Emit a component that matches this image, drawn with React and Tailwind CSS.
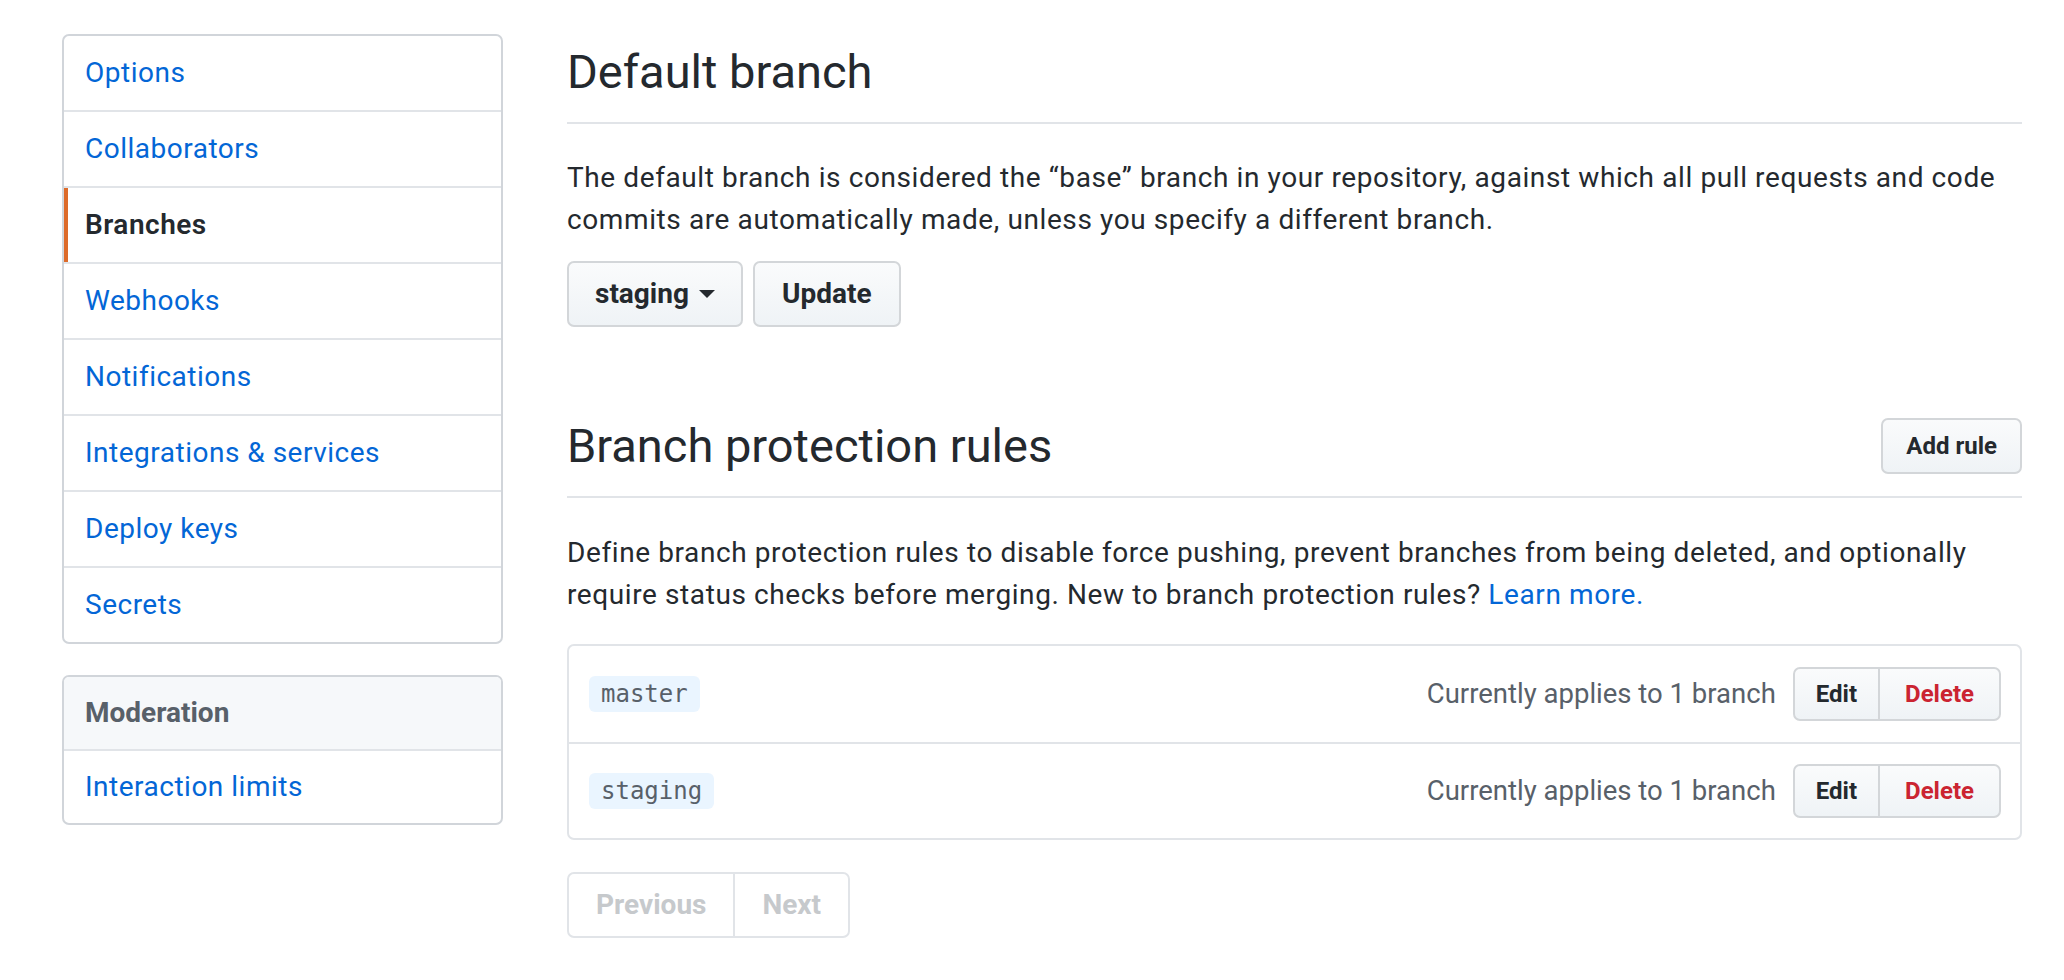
import React from 'react';

const menu = [
    { label: 'Options' },
    { label: 'Collaborators' },
    { label: 'Branches', selected: true },
    { label: 'Webhooks' },
    { label: 'Notifications' },
    { label: 'Integrations & services' },
    { label: 'Deploy keys' },
    { label: 'Secrets' }
];

const rules = ['master', 'staging'];

const btn = 'rounded-[7px] border-2 border-[#d3d6d9] bg-gradient-to-b from-[#fafbfc] to-[#eff3f6] font-bold text-[#24292e]';

const Sidebar = () => {
    return (
        <aside className="w-[441px] shrink-0">
            <nav className="rounded-[7px] border-2 border-[#d1d5da] overflow-hidden">
                {menu.map((item, index) => (
                    <a
                        key={item.label}
                        href="#"
                        className={`relative flex h-[74px] items-center pl-[21px] text-[28px] tracking-[0.5px] ${index > 0 ? 'border-t-2 border-[#e1e4e8] h-[76px]' : ''} ${item.selected ? 'font-semibold text-[#24292e]' : 'text-[#0366d6]'}`}
                    >
                        {/* orange marker for the current page */}
                        {item.selected && <span className="absolute left-0 top-0 bottom-0 w-[4px] bg-[#dd6b2a]"></span>}
                        {item.label}
                    </a>
                ))}
            </nav>

            <nav className="mt-[31px] rounded-[7px] border-2 border-[#d1d5da] overflow-hidden">
                <div className="flex h-[72px] items-center bg-[#f6f8fa] pl-[21px] text-[28px] font-bold text-[#586069]">
                    Moderation
                </div>
                <a href="#" className="flex h-[74px] items-center border-t-2 border-[#e1e4e8] pl-[21px] text-[28px] tracking-[0.5px] text-[#0366d6]">
                    Interaction limits
                </a>
            </nav>
        </aside>
    );
};

const App = () => {
    return (
        <div className="min-h-screen bg-white font-['Roboto',sans-serif] text-[#24292e]">
            <div className="flex gap-[64px] pl-[62px] pr-[42px] pt-[34px]">
                <Sidebar />

                <main className="flex-1 pt-[8px]">
                    <div className="border-b-2 border-[#e1e4e8] pb-[20px]">
                        <h2 className="text-[47px] leading-[60px] font-normal">Default branch</h2>
                    </div>
                    <p className="mt-[33px] text-[28px] leading-[42px] tracking-[0.6px]">
                        The default branch is considered the “base” branch in your repository, against which all pull requests and code commits are automatically made, unless you specify a different branch.
                    </p>
                    <div className="mt-[20px] flex gap-[10px]">
                        <button className={`${btn} flex h-[66px] items-center gap-[10px] px-[26px] text-[28px]`}>
                            staging
                            <svg width="16" height="8" viewBox="0 0 16 8">
                                <path d="M0 0h16L8 8z" fill="#24292e" />
                            </svg>
                        </button>
                        <button className={`${btn} h-[66px] px-[27px] text-[28px]`}>Update</button>
                    </div>

                    <div className="mt-[89px] flex items-center justify-between border-b-2 border-[#e1e4e8] pb-[20px]">
                        <h2 className="text-[47px] leading-[60px] font-normal">Branch protection rules</h2>
                        <button className={`${btn} h-[56px] px-[23px] text-[24px]`}>Add rule</button>
                    </div>
                    <p className="mt-[34px] text-[28px] leading-[42px] tracking-[0.6px]">
                        Define branch protection rules to disable force pushing, prevent branches from being deleted, and optionally require status checks before merging. New to branch protection rules?{' '}
                        <a href="#" className="text-[#0366d6]">Learn more.</a>
                    </p>

                    <div className="mt-[28px] rounded-[7px] border-2 border-[#e1e4e8]">
                        {rules.map((name, index) => (
                            <div
                                key={name}
                                className={`flex h-[96px] items-center justify-between pl-[20px] pr-[19px] ${index > 0 ? 'border-t-2 border-[#e1e4e8]' : ''}`}
                            >
                                <code className="rounded-[6px] bg-[#eaf5ff] px-[12px] py-[3px] font-['DejaVu_Sans_Mono',monospace] text-[24px] leading-[30px] text-[#586069]">
                                    {name}
                                </code>
                                <div className="flex items-center gap-[17px]">
                                    <span className="text-[27.5px] text-[#586069]">Currently applies to 1 branch</span>
                                    <div className={`${btn} flex h-[54px] overflow-hidden text-[24px]`}>
                                        <button className="px-[21px]">Edit</button>
                                        <button className="border-l-2 border-[#d3d6d9] px-[25px] text-[#cb2431]">Delete</button>
                                    </div>
                                </div>
                            </div>
                        ))}
                    </div>

                    <div className="mt-[32px] inline-flex h-[66px] rounded-[7px] border-2 border-[#e1e4e8] text-[28px] font-bold text-[#c6c9cc]">
                        <span className="flex items-center px-[27px]">Previous</span>
                        <span className="flex items-center border-l-2 border-[#e1e4e8] px-[27px]">Next</span>
                    </div>
                </main>
            </div>
        </div>
    );
};

export default App;
